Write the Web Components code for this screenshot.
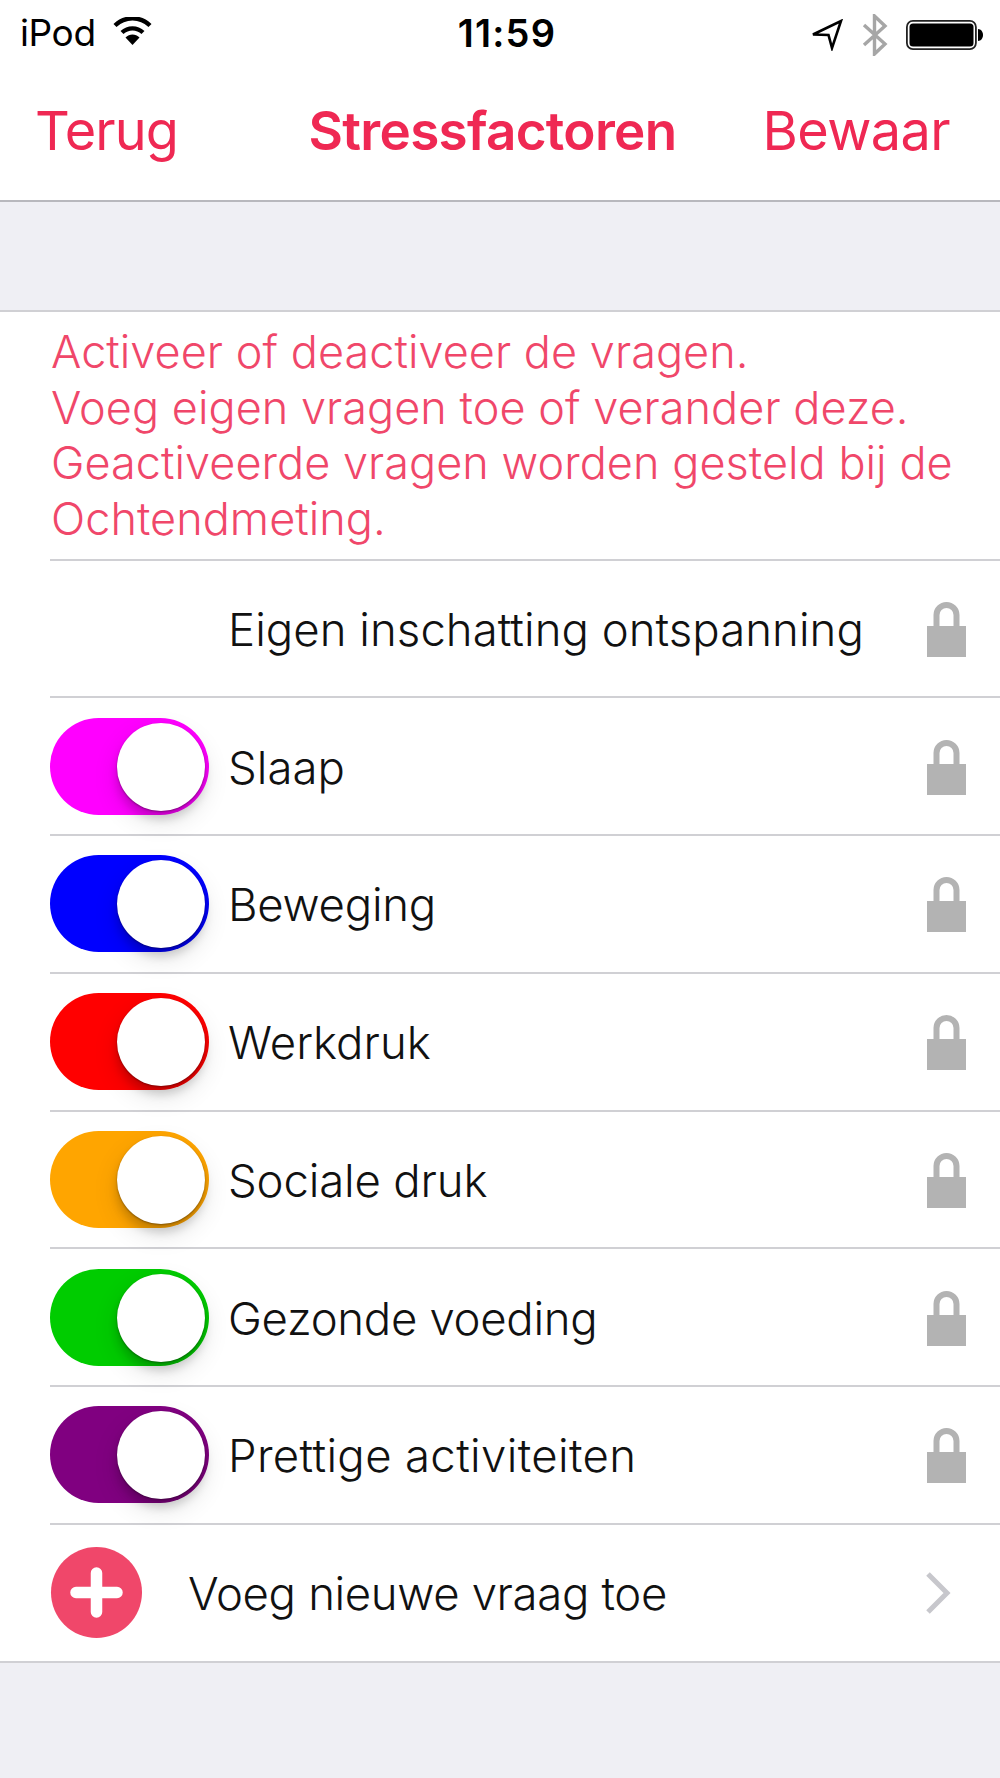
<!doctype html>
<html lang="nl">
<head>
<meta charset="utf-8">
<title>Stressfactoren</title>
<style>
	html,body{margin:0;height:100%;background:#efeff4}
	body{font-family:Inter,"Liberation Sans",sans-serif;overflow:hidden}
</style>
</head>
<body>
<status-bar></status-bar>
<nav-bar back="Terug" save="Bewaar">Stressfactoren</nav-bar>
<question-list>
	<intro-text>Activeer of deactiveer de vragen.<br>Voeg eigen vragen toe of verander deze.<br>Geactiveerde vragen worden gesteld bij de<br>Ochtendmeting.</intro-text>
	<stress-row>Eigen inschatting ontspanning</stress-row>
	<stress-row color="#f0f">Slaap</stress-row>
	<stress-row color="#00f" style="letter-spacing:-.25px">Beweging</stress-row>
	<stress-row color="#f00">Werkdruk</stress-row>
	<stress-row color="#ffa500" style="letter-spacing:-.15px">Sociale druk</stress-row>
	<stress-row color="#00cc00" style="letter-spacing:-.3px">Gezonde voeding</stress-row>
	<stress-row color="#800080" style="letter-spacing:.35px">Prettige activiteiten</stress-row>
	<add-row>Voeg nieuwe vraag toe</add-row>
</question-list>
<script>
const define = (tag, html, init) => customElements.define(tag, class extends HTMLElement {
	constructor() {
		super();
		this.attachShadow({mode: 'open'}).innerHTML = html;
	}

	connectedCallback() {
		if (init) {
			init(this);
		}
	}
});

define('status-bar', '' +
	'<style>' +
		':host{display:grid;grid-template-columns:1fr auto 1fr;align-items:center;box-sizing:border-box;height:70px;padding:0 17px 0 20px;background:#fff;color:#000;font-size:37px;letter-spacing:-.4px}' +
		'.left,.right{display:flex;align-items:center}' +
		'.left svg{margin-left:17px;margin-bottom:3px}' +
		'.left,.time{padding-bottom:5px}' +
		'.right{justify-content:flex-end}' +
		'.time{font-weight:600;margin-left:11px;font-size:38px;letter-spacing:1.2px}' +
		'svg{display:block}' +
	'</style>' +
	'<div class="left">iPod' +
		'<svg width="39" height="28" viewBox="0 0 39 28">' +
			'<path d="M2 8.5C12-1 27-1 37 8.5" fill="none" stroke="#000" stroke-width="4.4"/>' +
			'<path d="M9 15.5C15 10 24 10 30 15.5" fill="none" stroke="#000" stroke-width="4.4"/>' +
			'<path d="M12.5 20.5C16.5 16.5 22.5 16.5 26.5 20.5L19.5 28Z"/>' +
		'</svg>' +
	'</div>' +
	'<div class="time">11:59</div>' +
	'<div class="right">' +
		'<svg width="32" height="32" viewBox="0 0 32 32" style="margin-right:19px"><path d="M2 15.5 30 2 21 29 17.5 16Z" fill="none" stroke="#000" stroke-width="2.6" stroke-linejoin="miter"/></svg>' +
		'<svg width="26" height="42" viewBox="0 0 26 42" style="margin-right:18px"><path d="M2 11 23 30 12.5 40V2L23 12 2 31" fill="none" stroke="#a6a6a6" stroke-width="3.4"/></svg>' +
		'<svg width="77" height="30" viewBox="0 0 77 30">' +
			'<rect x=".9" y=".9" width="69" height="28.2" rx="6" fill="#fff" stroke="#222" stroke-width="1.8"/>' +
			'<rect x="3.5" y="3.5" width="64" height="23" rx="3.5"/>' +
			'<path d="M72 9c3 .3 5 2.5 5 6s-2 5.700-5 6Z"/>' +
		'</svg>' +
	'</div>'
);

define('nav-bar', '' +
	'<style>' +
		':host{display:grid;grid-template-columns:1fr auto 1fr;align-items:center;box-sizing:content-box;height:121px;padding:0 50px 9px 35px;background:#fff;border-bottom:2px solid #b8b8bd;color:#ef2853;font-size:54px;letter-spacing:-.9px}' +
		'.title{font-weight:600;font-size:53px;letter-spacing:-.7px}' +
		'.save{text-align:right;letter-spacing:-.6px}' +
	'</style>' +
	'<div id="back"></div>' +
	'<div class="title"><slot></slot></div>' +
	'<div class="save" id="save"></div>',
	el => {
		el.shadowRoot.getElementById('back').textContent = el.getAttribute('back');
		el.shadowRoot.getElementById('save').textContent = el.getAttribute('save');
	}
);

define('question-list', '' +
	'<style>' +
		':host{display:block;margin-top:108px;background:#fff;border-top:2px solid #d0d0d4;border-bottom:2px solid #d0d0d4}' +
	'</style>' +
	'<slot></slot>'
);

define('intro-text', '' +
	'<style>' +
		':host{display:block;height:246.500px;box-sizing:border-box;margin-left:51px;padding-top:12px;color:#f0476a;font-size:45px;font-weight:300;line-height:55.7px;letter-spacing:.05px;white-space:nowrap}' +
	'</style>' +
	'<slot></slot>'
);

define('ios-toggle', '' +
	'<style>' +
		':host{display:block;position:relative;width:159px;height:97px;border-radius:49px;background:var(--on)}' +
		'.knob{position:absolute;top:5px;right:4px;width:88px;height:88px;border-radius:50%;background:#fff;box-shadow:0 1px 2px rgba(0,0,0,.35),0 8px 10px rgba(0,0,0,.16),0 10px 26px rgba(0,0,0,.12)}' +
	'</style>' +
	'<div class="knob"></div>'
);

define('lock-icon', '' +
	'<style>' +
		':host{display:block;width:39px;height:57px}' +
		'svg{display:block}' +
	'</style>' +
	'<svg width="39" height="57" viewBox="0 0 39 57">' +
		'<path d="M9.500 27V15a10 10 0 0 1 20 0V27" fill="none" stroke="#b3b3b3" stroke-width="6"/>' +
		'<rect y="26" width="39" height="31" fill="#b3b3b3"/>' +
	'</svg>'
);

define('stress-row', '' +
	'<style>' +
		':host{display:flex;align-items:center;box-sizing:border-box;height:137.75px;margin-left:50px;padding-right:34px;border-top:2px solid #d0d0d4;color:#111;font-size:45.500px;font-weight:300;letter-spacing:.05px}' +
		'.toggle{width:159px;flex:none;margin-right:19px}' +
		'.label{flex:1;padding-top:2px}' +
	'</style>' +
	'<div class="toggle" id="toggle"></div>' +
	'<div class="label"><slot></slot></div>' +
	'<lock-icon></lock-icon>',
	el => {
		const color = el.getAttribute('color');
		if (color) {
			const toggle = document.createElement('ios-toggle');
			toggle.style.setProperty('--on', color);
			el.shadowRoot.getElementById('toggle').append(toggle);
		}
	}
);

define('add-row', '' +
	'<style>' +
		':host{display:flex;align-items:center;box-sizing:border-box;height:137.75px;margin-left:50px;padding-right:49px;border-top:2px solid #d0d0d4;color:#111;font-size:45.500px;font-weight:300;letter-spacing:-.35px}' +
		'.add{flex:none;position:relative;width:91px;height:91px;margin:0 46px 0 1px;border-radius:50%;background:#f0476a}' +
		'svg{display:block}' +
		'.add svg{position:absolute;left:19px;top:20px}' +
		'.label{flex:1;padding-top:2px}' +
	'</style>' +
	'<div class="add"><svg width="53" height="51" viewBox="0 0 53 51"><path d="M26.500 6V45M6 25.500H47" stroke="#fff" stroke-width="11.500" stroke-linecap="round"/></svg></div>' +
	'<div class="label"><slot></slot></div>' +
	'<svg width="26" height="42" viewBox="0 0 26 42"><path d="M3 2 22 21 3 40" fill="none" stroke="#c7c7cc" stroke-width="5"/></svg>'
);
</script>
</body>
</html>
